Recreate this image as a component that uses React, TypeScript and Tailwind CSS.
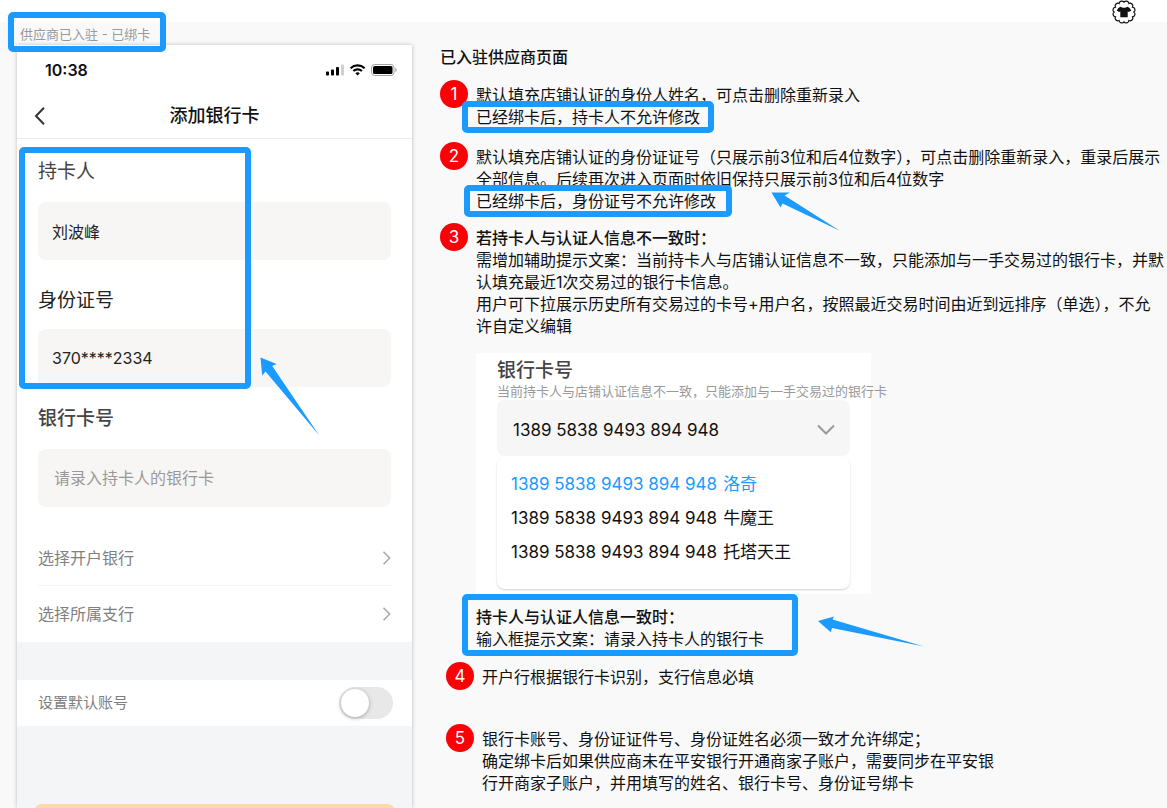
import { useState } from "react";

const CARD_NUMBER = "1389 5838 9493 894 948";

const HOLDERS = ["洛奇", "牛魔王", "托塔天王"];

interface NoteProps {
  index: number;
  className?: string;
  children: React.ReactNode;
}

// Numbered remark: red badge on the left, text block on the right
function Note({ index, className = "", children }: NoteProps) {
  return (
    <li className={`flex items-start gap-2 ${className}`}>
      <span className="-mt-1 flex size-7 shrink-0 items-center justify-center rounded-full bg-[#fb0007] text-[17px] text-white">
        {index}
      </span>
      <div className="min-w-0 flex-1 whitespace-nowrap">{children}</div>
    </li>
  );
}

// Blue frame laid over the block it belongs to
function Highlight({ className }: { className: string }) {
  return (
    <span
      aria-hidden="true"
      className={`pointer-events-none absolute z-10 rounded-[5px] border-[6px] border-[#1b9aff] ${className}`}
    />
  );
}

function StatusIcons() {
  return (
    <svg width="72" height="14" viewBox="0 0 72 14" aria-hidden="true">
      <rect x="0" y="8.5" width="3" height="4" rx="0.8" />
      <rect x="5" y="6.5" width="3" height="6" rx="0.8" />
      <rect x="10" y="4" width="3" height="8.5" rx="0.8" />
      <rect x="15" y="1.5" width="3" height="11" rx="0.8" fill="#d0d0d0" />
      <g fill="none" stroke="#000" strokeWidth="2.1">
        <path d="M24.6 5.2a10.2 10.2 0 0 1 14 0" />
        <path d="M27.3 8.1a6.2 6.2 0 0 1 8.6 0" />
      </g>
      <path d="M31.6 12.6l-2.2-2.3a3.3 3.3 0 0 1 4.4 0z" />
      <rect x="45.5" y="1.5" width="22.5" height="11" rx="3" fill="none" stroke="#a3a3a3" />
      <rect x="47" y="3" width="19.5" height="8" rx="1.6" />
      <path d="M69.3 5v4c.9-.4 1.4-1.1 1.4-2s-.5-1.6-1.4-2z" fill="#a3a3a3" />
    </svg>
  );
}

function ShirtBadge() {
  return (
    <svg width="24" height="24" viewBox="0 0 24 24" aria-hidden="true">
      <path
        d="M12 2.200A2.700 2.700 0 0 1 16.900 3.500A2.700 2.700 0 0 1 20.500 7.100A2.700 2.700 0 0 1 21.800 12A2.700 2.700 0 0 1 20.500 16.900A2.700 2.700 0 0 1 16.900 20.500A2.700 2.700 0 0 1 12 21.800A2.700 2.700 0 0 1 7.100 20.500A2.700 2.700 0 0 1 3.500 16.900A2.700 2.700 0 0 1 2.200 12A2.700 2.700 0 0 1 3.500 7.100A2.700 2.700 0 0 1 7.100 3.500A2.700 2.700 0 0 1 12 2.200z"
        fill="#fff"
        stroke="#111"
        strokeWidth="1.2"
      />
      <path
        d="M8.800 6.800c1.200 1.300 5.200 1.300 6.400 0 1.800.4 3.200 1.700 4 3.900l-2.500 1.400-1-.7v5.800H8.300v-5.800l-1 .7-2.500-1.400c.8-2.200 2.200-3.500 4-3.900z"
        fill="#111"
      />
    </svg>
  );
}

function ChevronRight() {
  return (
    <svg width="9" height="16" viewBox="0 0 9 16" fill="none" stroke="#aaa" strokeWidth="1.6" aria-hidden="true">
      <path d="M1.500 1.800 7.700 8l-6.200 6.200" />
    </svg>
  );
}

function PhoneMock() {
  const [isDefault, setIsDefault] = useState(false);

  return (
    <div className="min-h-0 flex-1 bg-[#f4f5f7] shadow-[0_0_4px_rgba(0,0,0,0.25)]">
      <div className="border-b border-[#ececec] bg-white">
        <div className="flex h-[50px] items-center justify-between pr-3.5 pl-7">
          <span className="text-base font-semibold text-[#111]">10:38</span>
          <StatusIcons />
        </div>
        <div className="grid h-[43px] grid-cols-[48px_1fr_48px] items-center pb-0.5">
          <button type="button" aria-label="返回" className="pl-4">
            <svg width="14" height="20" viewBox="0 0 14 20" fill="none" stroke="#333" strokeWidth="2">
              <path d="M11 1.800 3 10l8 8.200" />
            </svg>
          </button>
          <h1 className="text-center text-lg font-medium text-[#111]">添加银行卡</h1>
        </div>
      </div>

      <form className="bg-white">
        <div className="relative px-[21px] pt-[19px]">
          <label htmlFor="holder" className="block text-[19px] leading-7 text-[#444]">
            持卡人
          </label>
          <input
            id="holder"
            readOnly
            value="刘波峰"
            className="mt-4 block h-[58px] w-full rounded-lg bg-[#f7f6f5] px-3.5 text-base text-[#222] outline-none"
          />
          <label htmlFor="idcard" className="mt-[27px] block text-[19px] leading-7 text-[#222]">
            身份证号
          </label>
          <input
            id="idcard"
            readOnly
            value="370****2334"
            className="mt-3.5 block h-[58px] w-full rounded-lg bg-[#f7f6f5] px-3.5 text-base text-[#222] outline-none"
          />
          <Highlight className="top-2 -bottom-0.5 left-0.5 w-[232px]" />
          <svg
            className="pointer-events-none absolute -bottom-[50px] left-[243px] z-10"
            width="60"
            height="80"
            viewBox="0 0 60 80"
            aria-hidden="true"
          >
            <path d="M0.500 0.500 16.700 7l-4.500 2L59.300 78.500 5.500 14.500 2.200 18.500z" fill="#1b9aff" />
          </svg>
        </div>

        <div className="px-[21px] pt-[18px] pb-[23px]">
          <label htmlFor="cardno" className="block text-[19px] leading-7 font-medium text-[#444]">
            银行卡号
          </label>
          <input
            id="cardno"
            placeholder="请录入持卡人的银行卡"
            className="mt-4 block h-[58px] w-full rounded-lg bg-[#f7f6f5] px-4 text-base text-[#222] outline-none placeholder:text-[#999]"
          />
        </div>

        <div className="px-[21px] text-base text-[#808080]">
          <button type="button" className="flex h-14 w-full items-center justify-between border-b border-[#f3f3f3]">
            选择开户银行
            <ChevronRight />
          </button>
          <button type="button" className="flex h-14 w-full items-center justify-between">
            选择所属支行
            <ChevronRight />
          </button>
        </div>
      </form>

      <label className="mt-[38px] flex h-[46px] items-center justify-between bg-white pr-[19px] pl-[21px] text-[15px] text-[#808080]">
        设置默认账号
        <input
          type="checkbox"
          role="switch"
          checked={isDefault}
          onChange={(e) => setIsDefault(e.target.checked)}
          className="h-8 w-[54px] appearance-none rounded-full bg-[#e8e8e8] p-0.5 before:block before:size-7 before:rounded-full before:bg-white before:shadow-[0_1px_4px_rgba(0,0,0,0.3)] checked:bg-[#1b9aff] checked:before:ml-[22px]"
        />
      </label>

      <div className="px-[17px] pt-[78px]">
        <button type="button" aria-label="确定" className="h-12 w-full rounded-lg bg-[#fad9ab]" />
      </div>
    </div>
  );
}

function CardPicker() {
  const [selected, setSelected] = useState(0);

  return (
    <div className="mt-4 w-[395px] bg-white px-[21px] pt-1.5 pb-[5px]">
      <label htmlFor="history" className="block text-[19px] leading-6 font-medium text-[#444]">
        银行卡号
      </label>
      <p className="text-[13px] leading-4 text-[#999]">
        当前持卡人与店铺认证信息不一致，只能添加与一手交易过的银行卡
      </p>
      <div className="relative mt-px">
        <select
          id="history"
          value={selected}
          onChange={(e) => setSelected(Number(e.target.value))}
          className="block h-14 w-full appearance-none rounded-lg bg-[#f6f6f6] px-4 pt-1 text-[17px] text-[#111] outline-none"
        >
          {HOLDERS.map((name, i) => (
            <option key={name} value={i}>
              {CARD_NUMBER}
            </option>
          ))}
        </select>
        <svg
          className="pointer-events-none absolute top-6 right-3.5"
          width="20"
          height="12"
          viewBox="0 0 20 12"
          fill="none"
          stroke="#999"
          strokeWidth="2"
          aria-hidden="true"
        >
          <path d="M2 1.500 10 9.500l8-8" />
        </svg>
      </div>
      <ul className="mt-px rounded-lg bg-white pt-2.5 pb-5 shadow-[0_1px_2px_rgba(0,0,0,0.18)]">
        {HOLDERS.map((name, i) => (
          <li key={name}>
            <button
              type="button"
              onClick={() => setSelected(i)}
              className={`flex h-[34px] w-full items-center gap-1.5 px-3.5 text-[17px] ${
                i === selected ? "text-[#1b9aff]" : "text-[#111]"
              }`}
            >
              <span>{CARD_NUMBER}</span>
              <span>{name}</span>
            </button>
          </li>
        ))}
      </ul>
    </div>
  );
}

export default function App() {
  return (
    <div className="flex h-screen flex-col overflow-hidden bg-[#f9f9f9] font-['Inter','Noto_Sans_CJK_SC',sans-serif]">
      <header className="flex h-[22px] shrink-0 items-start justify-end bg-white pr-[31px]">
        <ShirtBadge />
      </header>

      <main className="flex min-h-0 flex-1 gap-7 pl-[17px]">
        <section className="flex w-[395px] shrink-0 flex-col">
          <div className="flex h-[23px] shrink-0 items-center pl-[3px]">
            <h2 className="relative text-[13px] leading-5 text-[#999]">
              供应商已入驻 - 已绑卡
              <Highlight className="-top-3 -right-4 -bottom-2 -left-3" />
            </h2>
          </div>
          <PhoneMock />
        </section>

        <section className="min-w-0 flex-1 pt-6 text-base leading-[22px] text-[#111]">
          <h2 className="font-medium">已入驻供应商页面</h2>
          <ol className="mt-4">
            <Note index={1}>
              <p>默认填充店铺认证的身份人姓名，可点击删除重新录入</p>
              <p className="relative w-fit">
                已经绑卡后，持卡人不允许修改
                <Highlight className="-inset-x-3.5 -inset-y-[5px]" />
              </p>
            </Note>

            <Note index={2} className="mt-[18px]">
              <p>默认填充店铺认证的身份证证号（只展示前3位和后4位数字），可点击删除重新录入，重录后展示</p>
              <p>全部信息。后续再次进入页面时依旧保持只展示前3位和后4位数字</p>
              <div className="relative w-fit">
                已经绑卡后，身份证号不允许修改
                <Highlight className="-inset-y-[5px] -right-4 -left-3" />
                <svg
                  className="pointer-events-none absolute top-0.5 left-[295px]"
                  width="70"
                  height="40"
                  viewBox="0 0 70 40"
                  aria-hidden="true"
                >
                  <path d="M0.500 0.500H19l-5.500 3L68.800 38.800 11.500 11.500 9.500 15.500z" fill="#1b9aff" />
                </svg>
              </div>
            </Note>

            <Note index={3} className="mt-[15px]">
              <p className="font-medium">若持卡人与认证人信息不一致时：</p>
              <p>需增加辅助提示文案：当前持卡人与店铺认证信息不一致，只能添加与一手交易过的银行卡，并默</p>
              <p>认填充最近1次交易过的银行卡信息。</p>
              <p>用户可下拉展示历史所有交易过的卡号+用户名，按照最近交易时间由近到远排序（单选），不允</p>
              <p>许自定义编辑</p>
              <CardPicker />
              <div className="relative mt-3 w-fit">
                <p className="font-medium">持卡人与认证人信息一致时：</p>
                <p>输入框提示文案：请录入持卡人的银行卡</p>
                <Highlight className="-top-3 -right-[34px] -bottom-1.5 -left-3.5" />
                <svg
                  className="pointer-events-none absolute top-2.5 left-[341px]"
                  width="108"
                  height="32"
                  viewBox="0 0 108 32"
                  aria-hidden="true"
                >
                  <path d="M1 5 17 0.500l-1.500 3L107 30.500 15 12l-1.200 4.300z" fill="#1b9aff" />
                </svg>
              </div>
            </Note>

            <Note index={4} className="mt-4 pl-1.5">
              <p>开户行根据银行卡识别，支行信息必填</p>
            </Note>

            <Note index={5} className="mt-[38px] pl-1.5">
              <p>银行卡账号、身份证证件号、身份证姓名必须一致才允许绑定；</p>
              <p>确定绑卡后如果供应商未在平安银行开通商家子账户，需要同步在平安银</p>
              <p>行开商家子账户，并用填写的姓名、银行卡号、身份证号绑卡</p>
            </Note>
          </ol>
        </section>
      </main>
    </div>
  );
}
